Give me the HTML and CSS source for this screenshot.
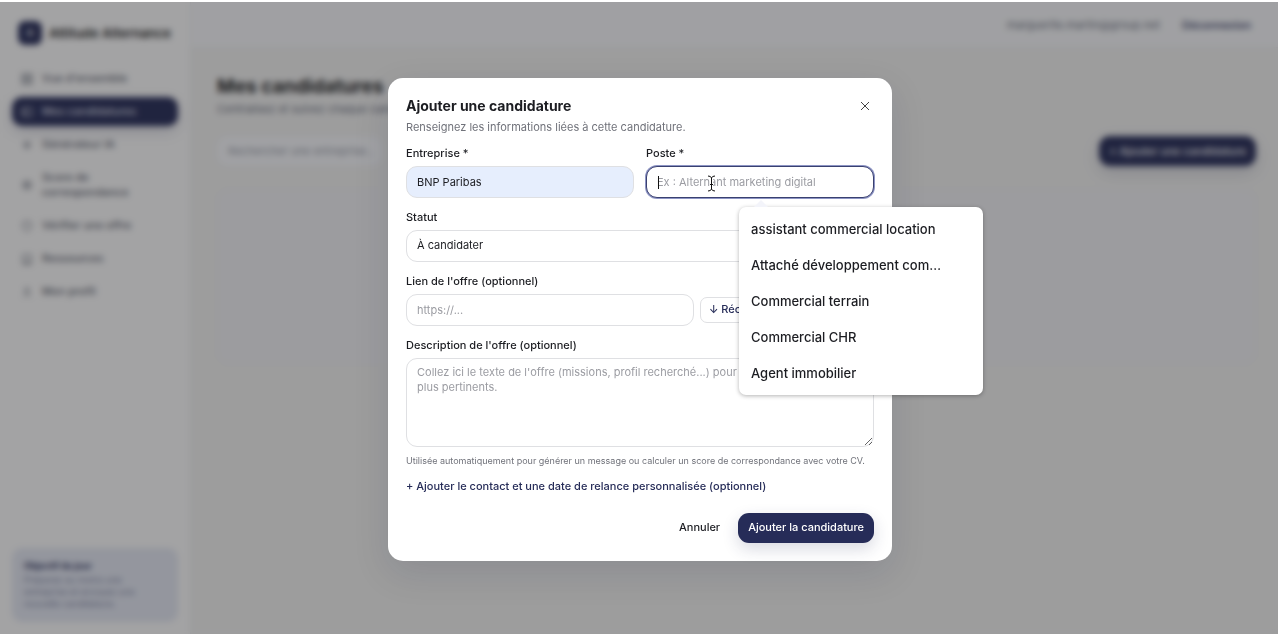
FILE: index.html
```
<!DOCTYPE html>
<html lang="fr">
<head>
    <meta charset="UTF-8">
    <meta name="viewport" content="width=device-width, initial-scale=1.0">
    <title>Mes candidatures - Attitude Alternance</title>
    <link rel="stylesheet" href="styles.css">
</head>
<body>

<div class="app">
    <aside class="sidebar">
        <div class="brand"><span class="brand-logo">A</span>Attitude Alternance</div>
        <nav class="nav">
            <a href="#"><svg viewBox="0 0 12 12"><path d="M1 1h4v4H1zM7 1h4v4H7zM1 7h4v4H1zM7 7h4v4H7z"/></svg>Vue d'ensemble</a>
            <a href="#" class="active"><svg viewBox="0 0 12 12"><path d="M1 2h10v8H1zM5 2v8M1 6h4"/></svg>Mes candidatures</a>
            <a href="#"><svg viewBox="0 0 12 12"><path d="M6 2l1 3 3 1-3 1-1 3-1-3-3-1 3-1z"/></svg>Générateur IA</a>
            <a href="#"><svg viewBox="0 0 12 12"><circle cx="6" cy="6" r="4"/><circle cx="6" cy="6" r="2"/></svg><span>Score de correspondance</span></a>
            <a href="#"><svg viewBox="0 0 12 12"><path d="M6 1l4 2v3c0 3-2 4-4 5-2-1-4-2-4-5V3z"/></svg>Vérifier une offre</a>
            <a href="#"><svg viewBox="0 0 12 12"><path d="M2 2h8v7H2zM1 11h10"/></svg>Ressources</a>
            <a href="#"><svg viewBox="0 0 12 12"><circle cx="6" cy="4" r="2"/><path d="M3 11c0-4 6-4 6 0"/></svg>Mon profil</a>
        </nav>
        <div class="goal">
            <strong>Objectif du jour</strong>
            <p>Préparez au moins une entreprise et envoyez une nouvelle candidature.</p>
        </div>
    </aside>

    <div class="page">
        <header class="topbar">
            <span>marguerite.martin@group.net</span>
            <a href="#">Déconnexion</a>
        </header>
        <main class="content">
            <h1>Mes candidatures</h1>
            <p class="lead">Centralisez et suivez chaque candidature.</p>
            <div class="toolbar">
                <input type="text" class="search" aria-label="Rechercher" placeholder="Rechercher une entreprise...">
                <button type="button" class="btn btn-primary">+ Ajouter une candidature</button>
            </div>
            <div class="board"></div>
        </main>
    </div>
</div>

<div class="overlay">
    <form class="modal" role="dialog" aria-labelledby="modal-title">
        <div class="modal-header">
            <h2 id="modal-title">Ajouter une candidature</h2>
            <button type="button" class="close" aria-label="Fermer">
                <svg viewBox="0 0 10 10"><path d="M1 1l8 8M9 1l-8 8"/></svg>
            </button>
        </div>
        <p class="modal-sub">Renseignez les informations liées à cette candidature.</p>

        <div class="fields">
            <div class="row-2">
                <div class="field">
                    <label for="company">Entreprise *</label>
                    <input type="text" id="company" class="autofilled" value="BNP Paribas">
                </div>
                <div class="field field-job">
                    <label for="job">Poste *</label>
                    <input type="text" id="job" class="focused" placeholder="Ex : Alternant marketing digital">
                    <span class="caret"></span>
                    <svg class="ibeam" viewBox="0 0 9 17"><path class="halo" d="M1 1q3 0 3.500 2Q5 1 8 1M4.500 3v11M1 16q3 0 3.500-2 .5 2 3.500 2M3 9.500h3"/><path d="M1 1q3 0 3.500 2Q5 1 8 1M4.500 3v11M1 16q3 0 3.500-2 .5 2 3.500 2M3 9.500h3"/></svg>
                    <!-- suggestions du navigateur -->
                    <ul class="suggestions">
                        <li>assistant commercial location</li>
                        <li>Attaché développement commercial</li>
                        <li>Commercial terrain</li>
                        <li>Commercial CHR</li>
                        <li>Agent immobilier</li>
                    </ul>
                </div>
            </div>

            <div class="field">
                <label for="status">Statut</label>
                <select id="status">
                    <option>À candidater</option>
                    <option>Candidature envoyée</option>
                </select>
            </div>

            <div class="field">
                <label for="link">Lien de l'offre (optionnel)</label>
                <div class="link-row">
                    <input type="url" id="link" placeholder="https://...">
                    <button type="button" class="btn-fetch">↓ Récupérer la description</button>
                </div>
            </div>

            <div class="field">
                <label for="description">Description de l'offre (optionnel)</label>
                <textarea id="description" placeholder="Collez ici le texte de l'offre (missions, profil recherché...) pour des messages&#10;plus pertinents."></textarea>
            </div>
        </div>

        <p class="hint">Utilisée automatiquement pour générer un message ou calculer un score de correspondance avec votre CV.</p>
        <button type="button" class="more">+ Ajouter le contact et une date de relance personnalisée (optionnel)</button>

        <div class="actions">
            <button type="button" class="btn btn-ghost">Annuler</button>
            <button type="submit" class="btn btn-primary">Ajouter la candidature</button>
        </div>
    </form>
</div>

</body>
</html>
```

FILE: styles.css
```
* {
    box-sizing: border-box;
}
body {
    margin: 0;
    padding-top: 2px;
    font-family: Inter, "Liberation Sans", sans-serif;
    font-size: 11px;
    line-height: 15px;
    color: #1c1d22;
    background: #fff;
}
h1, h2, p, ul {
    margin: 0;
    padding: 0;
}
input, select, textarea, button {
    font: inherit;
    color: inherit;
}
a {
    color: inherit;
    text-decoration: none;
}
svg {
    fill: none;
    stroke: currentColor;
}

/* application */
.app {
    display: flex;
    height: calc(100vh - 2px);
    background: #f5f5f4;
}
.sidebar {
    display: flex;
    flex-direction: column;
    width: 191px;
    padding: 19px 12px 12px;
    background: #fff;
    border-right: 1px solid #eef0f3;
}
.brand {
    display: flex;
    align-items: center;
    gap: 7px;
    padding-left: 6px;
    margin-bottom: 19px;
    font-size: 13px;
    font-weight: 600;
    white-space: nowrap;
}
.brand-logo {
    width: 24px;
    height: 24px;
    border-radius: 7px;
    background: #262c58;
    color: #fff;
    font-size: 9px;
    line-height: 24px;
    text-align: center;
}
.nav {
    display: flex;
    flex-direction: column;
    gap: 4px;
}
.nav a {
    display: flex;
    align-items: center;
    gap: 9px;
    padding: 7px 9px;
    border-radius: 10px;
    color: #5d6270;
    font-weight: 500;
}
.nav svg {
    flex: none;
    width: 12px;
    height: 12px;
}
.nav .active {
    background: #262c58;
    color: #dcdee8;
    box-shadow: 0 5px 14px rgba(38, 44, 88, 0.2);
}
.goal {
    margin-top: auto;
    padding: 12px;
    border-radius: 10px;
    background: #e6eaf5;
    color: #7d84a3;
    font-size: 9px;
    line-height: 12px;
}
.goal strong {
    display: block;
    margin-bottom: 2px;
    color: #262c58;
    font-size: 9px;
}
.page {
    flex: 1;
    min-width: 0;
}
.topbar {
    display: flex;
    align-items: center;
    justify-content: flex-end;
    gap: 22px;
    height: 46px;
    padding: 2px 27px 0;
    background: #fafbfd;
    border-bottom: 1px solid #eef0f3;
    color: #6b7080;
}
.topbar a {
    color: #262c58;
    font-weight: 500;
}
.content {
    padding: 27px 22px 0 26px;
}
.content h1 {
    font-size: 19px;
    line-height: 24px;
    font-weight: 700;
}
.lead {
    margin-top: 3px;
    color: #6b7080;
}
.toolbar {
    display: flex;
    justify-content: space-between;
    margin: 19px 0 23px;
}
.search {
    width: 166px;
    height: 30px;
    padding: 0 10px;
    border: 1px solid #f4f5f8;
    border-radius: 10px;
    background: #fbfcff;
}
.search::placeholder {
    color: #9a9eaa;
}
.board {
    height: 175px;
    border: 1px solid #eeeff4;
    border-radius: 12px;
    background: #f4f4f7;
}

/* boutons */
.btn {
    height: 30px;
    padding: 0 10px;
    border: 0;
    border-radius: 11px;
    font-weight: 500;
    white-space: nowrap;
}
.btn-primary {
    background: #262c58;
    color: #fff;
    box-shadow: 0 6px 16px rgba(38, 44, 88, 0.18);
}
.btn-ghost {
    background: none;
}

/* fenêtre modale */
.overlay {
    position: fixed;
    inset: 2px 0 0;
    display: flex;
    align-items: center;
    justify-content: center;
    padding: 2px 0 0 2px;
    background: rgba(25, 25, 27, 0.4);
    backdrop-filter: blur(3px);
}
.modal {
    width: 504px;
    padding: 18px;
    border-radius: 15px;
    background: #fff;
    box-shadow: 0 12px 36px rgba(20, 24, 50, 0.12);
}
.modal-header {
    display: flex;
    align-items: center;
    justify-content: space-between;
}
.modal-header h2 {
    font-size: 14px;
    line-height: 20px;
    font-weight: 700;
}
.close {
    display: flex;
    padding: 4px;
    border: 0;
    background: none;
    color: #444;
}
.close svg {
    width: 10px;
    height: 10px;
}
.modal-sub {
    margin: 4px 0 11px;
    color: #70727a;
}
.fields {
    display: flex;
    flex-direction: column;
    gap: 12px;
}
.row-2 {
    display: grid;
    grid-template-columns: 1fr 1fr;
    gap: 12px;
}
.field {
    display: flex;
    flex-direction: column;
    gap: 5px;
}
.field label {
    font-weight: 500;
}
.field input,
.field select,
.field textarea {
    width: 100%;
    min-width: 0;
    height: 32px;
    padding: 0 10px;
    border: 1px solid #dfe0e3;
    border-radius: 11px;
    outline: none;
    background: #fff;
}
.field select {
    appearance: none;
}
.field textarea {
    display: block;
    height: 89px;
    padding: 6px 10px;
    resize: vertical;
}
.field ::placeholder {
    color: #9b9ca2;
}
.field .autofilled {
    background: #e6eefd;
}
.field .focused {
    border-color: #3a4170;
    box-shadow: 0 0 0 1px #8d94c4;
}
.link-row {
    display: flex;
    align-items: center;
    gap: 6px;
}
.btn-fetch {
    flex: none;
    width: 174px;
    height: 26px;
    padding: 0 8px;
    border: 1px solid #dfe0e3;
    border-radius: 7px;
    background: #fff;
    color: #262c58;
    font-weight: 500;
    text-align: left;
}
.hint {
    margin-top: 7px;
    color: #70727a;
    font-size: 9px;
    line-height: 14px;
}
.more {
    display: block;
    margin-top: 11px;
    padding: 0;
    border: 0;
    background: none;
    color: #262c58;
    font-weight: 500;
}
.actions {
    display: flex;
    justify-content: flex-end;
    gap: 8px;
    margin-top: 19px;
}

/* saisie en cours dans le champ Poste */
.field-job {
    position: relative;
}
.caret {
    position: absolute;
    left: 12px;
    top: 30px;
    width: 1px;
    height: 13px;
    background: #111;
}
.ibeam {
    position: absolute;
    left: 61px;
    top: 29px;
    width: 9px;
    height: 17px;
    color: #111;
}
.ibeam .halo {
    stroke: #fff;
    stroke-width: 3;
}
.suggestions {
    position: absolute;
    left: 93px;
    top: 61px;
    width: 244px;
    padding: 4px 0;
    border-radius: 7px;
    background: #fff;
    box-shadow: 0 1px 4px rgba(0, 0, 0, 0.3);
    list-style: none;
}
.suggestions::before {
    content: "";
    position: absolute;
    left: 15px;
    top: -7px;
    border: 7px solid transparent;
    border-top: 0;
    border-bottom-color: #f3f4fa;
}
.suggestions li {
    width: 216px;
    padding: 0 12px;
    overflow: hidden;
    font-size: 13px;
    line-height: 36px;
    font-weight: 500;
    white-space: nowrap;
    text-overflow: ellipsis;
}
```
